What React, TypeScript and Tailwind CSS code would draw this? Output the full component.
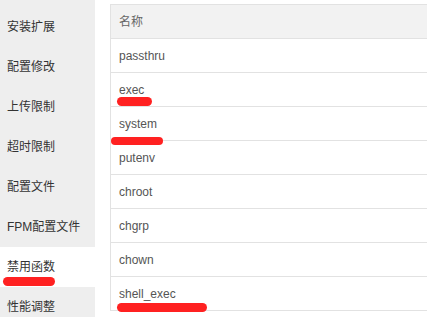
const menu = ['安装扩展', '配置修改', '上传限制', '超时限制', '配置文件', 'FPM配置文件', '禁用函数', '性能调整']
const funcs = ['passthru', 'exec', 'system', 'putenv', 'chroot', 'chgrp', 'chown', 'shell_exec']

const font = { fontFamily: '"Liberation Sans", "Noto Sans CJK SC", sans-serif' }

export default function App() {
  return (
    <div className="relative flex h-[317px] w-[427px] overflow-hidden bg-white" style={font}>
      {/* sidebar */}
      <div className="w-[95px] shrink-0 bg-[#eeeeee] pt-[7px]">
        {menu.map((m) => (
          <div
            key={m}
            className={`flex h-[40px] items-center pl-[7px] text-[12px] text-[#333] ${m === '禁用函数' ? 'bg-white' : ''}`}
          >
            {m}
          </div>
        ))}
      </div>

      {/* table */}
      <div className="ml-[15px] mt-[4px] w-[340px] shrink-0">
        <div className="border-l border-[#e2e2e2]">
          <div className="flex h-[35px] items-center border-y border-[#e2e2e2] bg-[#f2f2f2] pl-[8px] text-[12px] text-[#666]">
            名称
          </div>
          {funcs.map((f) => (
            <div key={f} className="flex h-[34px] items-center border-b border-[#e2e2e2] pl-[8px] text-[12px] text-[#555]">
              {f}
            </div>
          ))}
        </div>
      </div>

      {/* red annotation marks */}
      <div className="absolute left-[3px] top-[277px] h-[9px] w-[52px] rounded-full bg-[#ff2121]" />
      <div className="absolute left-[117px] top-[97px] h-[9px] w-[35px] rounded-full bg-[#ff2121]" />
      <div className="absolute left-[111px] top-[137px] h-[8px] w-[52px] rounded-full bg-[#ff2121]" />
      <div className="absolute left-[117px] top-[303px] h-[9px] w-[90px] rounded-full bg-[#ff2121]" />
    </div>
  )
}
